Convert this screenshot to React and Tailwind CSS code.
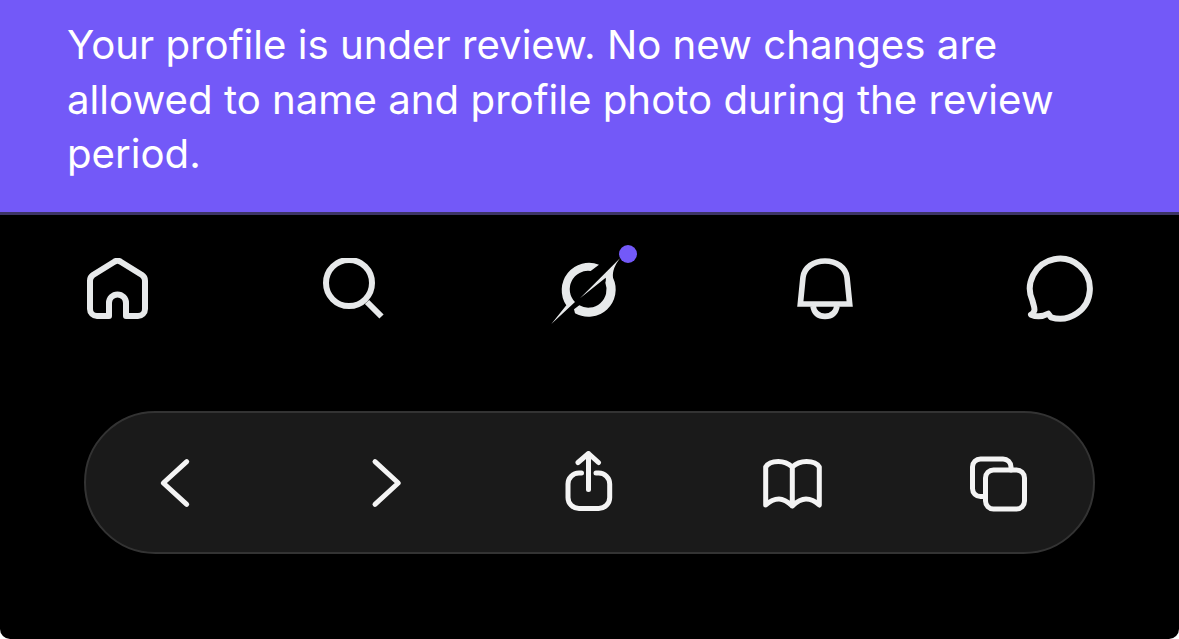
import React from 'react';

const NavIcon = ({ children, viewBox = '0 0 64 64', size = 64, stroke = 6 }) => (
  <svg
    width={size}
    height={size}
    viewBox={viewBox}
    fill="none"
    stroke="currentColor"
    strokeWidth={stroke}
    className="shrink-0"
  >
    {children}
  </svg>
);

const HomeIcon = () => (
  <NavIcon>
    <path d="M23 58V45a8.5 8.5 0 0 1 17 0V58H52a7 7 0 0 0 7-7V23a7 7 0 0 0-3-6L35 4a6 6 0 0 0-7 0L7 17a7 7 0 0 0-3 6V51a7 7 0 0 0 7 7Z" strokeLinejoin="round" />
  </NavIcon>
);

const SearchIcon = () => (
  <NavIcon>
    <circle cx="27" cy="25" r="23" />
    <path d="M45 44L59.5 58.5" />
  </NavIcon>
);

// Logo drawn in 3x coordinates, so the numbers read like the zoomed crop
const LogoIcon = () => (
  <svg width="100" height="100" viewBox="60 30 300 300" className="shrink-0">
    <path fill="#e7e9ea" d="M240 104A82 82 0 0 0 142 226L97 282L168 216A55 55 0 0 1 215 123Z" />
    <path fill="#e7e9ea" d="M183 205L303 85C288 105 280 122 282 143A82 82 0 0 1 168 250L165 238L181 226A55 55 0 0 0 259 158C261 152 261 147 260 143Z" />
    <circle cx="327" cy="72" r="27" fill="#7359f8" />
  </svg>
);

const BellIcon = () => (
  <NavIcon viewBox="42 54 192 192" stroke={17}>
    <path d="M64 192L72 112C76 82 104 63 138 63C172 63 200 82 204 112L212 192Z" />
    <path d="M102 198C106 222 122 229 138 229C154 229 170 222 174 198" />
  </NavIcon>
);

const ChatIcon = () => (
  <NavIcon viewBox="720 26 240 240" size={80} stroke={18}>
    <path d="M810 228A90 90 0 1 0 755 180C757 190 762 200 760 208C758 214 754 218 750 220C768 228 785 226 802 217Z" strokeLinejoin="round" />
  </NavIcon>
);

const ToolbarIcon = ({ children }) => (
  <svg
    width="64"
    height="64"
    viewBox="0 0 64 64"
    fill="none"
    stroke="currentColor"
    strokeWidth="5"
    strokeLinecap="round"
    strokeLinejoin="round"
    className="shrink-0"
  >
    {children}
  </svg>
);

export default function App() {
  return (
    <div className="h-[639px] w-full overflow-hidden bg-white">
      <div className="h-full overflow-hidden rounded-b-[10px] bg-black font-['Inter',sans-serif]">
        {/* Review notice */}
        <div className="h-[215px] border-b-[3px] border-[#3d3566] bg-[#7359f8] pl-[67px] pr-[80px] pt-[18px] text-[40.2px] leading-[54.5px] text-white">
          Your profile is under review. No new changes are allowed to name and profile photo during the review period.
        </div>

        {/* Tab bar */}
        <div className="grid h-[150px] grid-cols-5 text-[#e7e9ea]">
          <div className="flex items-center justify-center"><HomeIcon /></div>
          <div className="flex items-center justify-center"><SearchIcon /></div>
          <div className="flex items-center justify-center"><LogoIcon /></div>
          <div className="flex items-center justify-center"><BellIcon /></div>
          <div className="flex items-center justify-center"><ChatIcon /></div>
        </div>

        {/* Browser toolbar */}
        <div className="mx-[84px] mt-[46px] flex h-[143px] w-[1011px] items-center justify-between rounded-full border-2 border-[#333333] bg-[#1a1a1a] pl-[57px] pr-[63px] text-[#f4f4f4]">
          <ToolbarIcon>
            <path d="M43.7 10.7L20.3 32L43.7 53.3" />
          </ToolbarIcon>
          <ToolbarIcon>
            <path d="M26 10.7L49.3 32L26 53.3" />
          </ToolbarIcon>
          <ToolbarIcon>
            <path d="M26.5 22H24a11 11 0 0 0-11 11V46.5a11 11 0 0 0 11 11H43.7a11 11 0 0 0 11-11V33a11 11 0 0 0-11-11H41" />
            <path d="M33.5 38.5V2.5M23 11.5L33.5 2.5L43.5 11.5" />
          </ToolbarIcon>
          <ToolbarIcon>
            <path d="M32.3 16C28 12 24 10.5 18.3 10.5C13 10.5 8 12 5.7 16V54C10 50 14 48 19 48C24 48 28 51 32.3 55C36.5 51 40.5 48 46 48C51 48 55 50 59.3 54V16C57 12 52 10.5 46.5 10.5C41 10.5 36.5 12 32.3 16ZM32.3 16V55" />
          </ToolbarIcon>
          <ToolbarIcon>
            <rect x="19.5" y="19" width="39" height="39" rx="8" />
            <path d="M45 19V16a8 8 0 0 0-8-8H14.5a8 8 0 0 0-8 8V37.5a8 8 0 0 0 8 8H19.5" />
          </ToolbarIcon>
        </div>
      </div>
    </div>
  );
}
